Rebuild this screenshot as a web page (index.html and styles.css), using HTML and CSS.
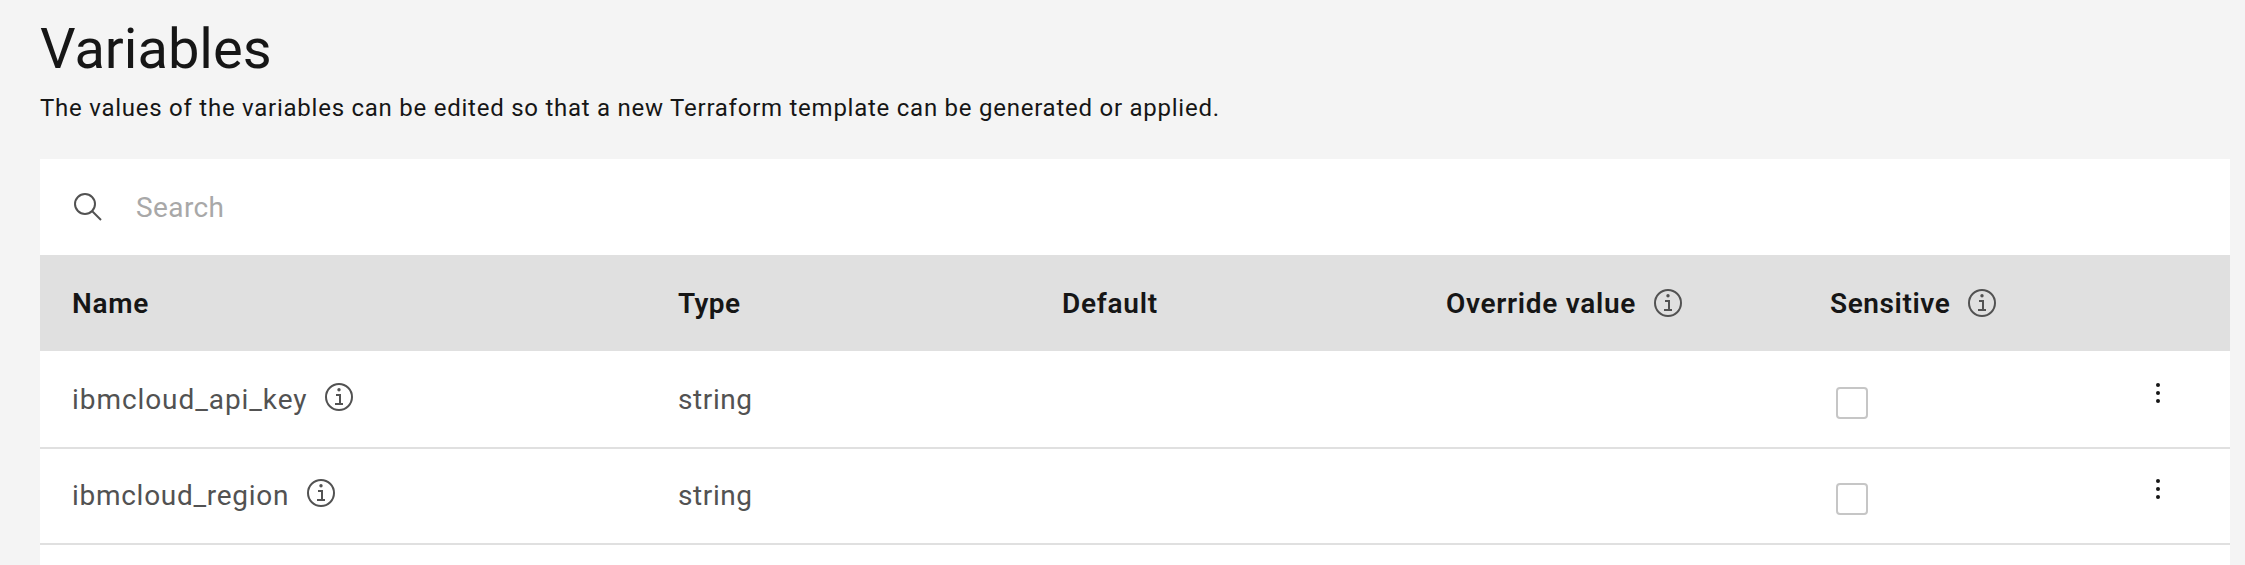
FILE: index.html
```html
<!DOCTYPE html>
<html lang="en">
<head>
<meta charset="utf-8">
<title>Variables</title>
<link rel="stylesheet" href="styles.css">
</head>
<body>
<svg class="sprite" aria-hidden="true">
  <symbol id="info" viewBox="0 0 28 28">
    <circle cx="14" cy="14" r="13" fill="none" stroke="currentColor" stroke-width="2"/>
    <circle cx="14" cy="6.8" r="1.7" fill="currentColor"/>
    <path d="M11 12h4v9M10 21h8" fill="none" stroke="currentColor" stroke-width="2"/>
  </symbol>
</svg>
<main class="page">
  <h1 class="title">Variables</h1>
  <p class="description">The values of the variables can be edited so that a new Terraform template can be generated or applied.</p>
  <section class="panel">
    <div class="search">
      <svg class="search-icon" viewBox="0 0 28 28"><circle cx="11" cy="11" r="10" fill="none" stroke="currentColor" stroke-width="2"/><path d="M18 18l9 9" fill="none" stroke="currentColor" stroke-width="2"/></svg>
      <span class="placeholder">Search</span>
    </div>
    <div class="row head">
      <div class="cell"><span class="text h-name">Name</span></div>
      <div class="cell"><span class="text h-type">Type</span></div>
      <div class="cell"><span class="text h-default">Default</span></div>
      <div class="cell"><span class="text h-override">Override value</span><svg class="info"><use href="#info"/></svg></div>
      <div class="cell"><span class="text h-sensitive">Sensitive</span><svg class="info"><use href="#info"/></svg></div>
      <div class="cell"></div>
    </div>
    <div class="row">
      <div class="cell"><span class="text key">ibmcloud_api_key</span><svg class="info raised"><use href="#info"/></svg></div>
      <div class="cell"><span class="text kind">string</span></div>
      <div class="cell"></div>
      <div class="cell"></div>
      <div class="cell"><span class="checkbox"></span></div>
      <div class="cell"><span class="menu"><i></i><i></i><i></i></span></div>
    </div>
    <div class="row ruled">
      <div class="cell"><span class="text region">ibmcloud_region</span><svg class="info raised"><use href="#info"/></svg></div>
      <div class="cell"><span class="text kind">string</span></div>
      <div class="cell"></div>
      <div class="cell"></div>
      <div class="cell"><span class="checkbox"></span></div>
      <div class="cell"><span class="menu"><i></i><i></i><i></i></span></div>
    </div>
    <div class="next ruled"></div>
  </section>
</main>
</body>
</html>
```
FILE: styles.css
```css
* { box-sizing: border-box; }
body { margin: 0; background: #f4f4f4; color: #161616; font-family: Roboto, "Liberation Sans", sans-serif; }
.sprite { display: none; }
.page { padding: 13px 15px 0 40px; }
.title { margin: 0; height: 72px; font-size: 56px; line-height: 72px; font-weight: 400; }
.description { margin: 0; height: 74px; padding-top: 7px; font-size: 24px; line-height: 32px; letter-spacing: .75px; }
.panel { background: #fff; }
.search { display: flex; align-items: center; gap: 34px; height: 96px; padding-left: 34px; color: #525252; font-size: 28px; }
.search-icon { width: 28px; height: 28px; }
.placeholder { color: #a8a8a8; letter-spacing: .4px; }
.row { display: grid; grid-template-columns: 606px repeat(3, 384px) 288px 1fr; height: 96px; font-size: 28px; line-height: 36px; color: #525252; }
.next { height: 22px; }
.ruled { box-shadow: inset 0 2px #e0e0e0; }
.head { background: #e0e0e0; font-weight: 600; }
.head .text { color: #161616; }
.cell { display: flex; align-items: center; padding-left: 32px; }
.text { padding-top: 2px; white-space: nowrap; }
.info { width: 28px; height: 28px; margin-left: 18px; flex: none; }
.raised { margin: 0 0 4px 17px; }
.key { letter-spacing: .93px; }
.region { letter-spacing: .72px; margin-right: .8px; }
.kind { letter-spacing: .6px; }
.h-name { letter-spacing: .7px; }
.h-type { letter-spacing: .4px; }
.h-default { letter-spacing: .75px; }
.h-override { letter-spacing: .7px; }
.h-sensitive { letter-spacing: .6px; }
.checkbox { width: 32px; height: 32px; margin: 8px 0 0 6px; border: 2px solid #c6c6c6; border-radius: 4px; }
.menu { display: grid; gap: 4px; margin: 0 0 12px 38px; }
.menu i { width: 4px; height: 4px; border-radius: 50%; background: #161616; }
```
